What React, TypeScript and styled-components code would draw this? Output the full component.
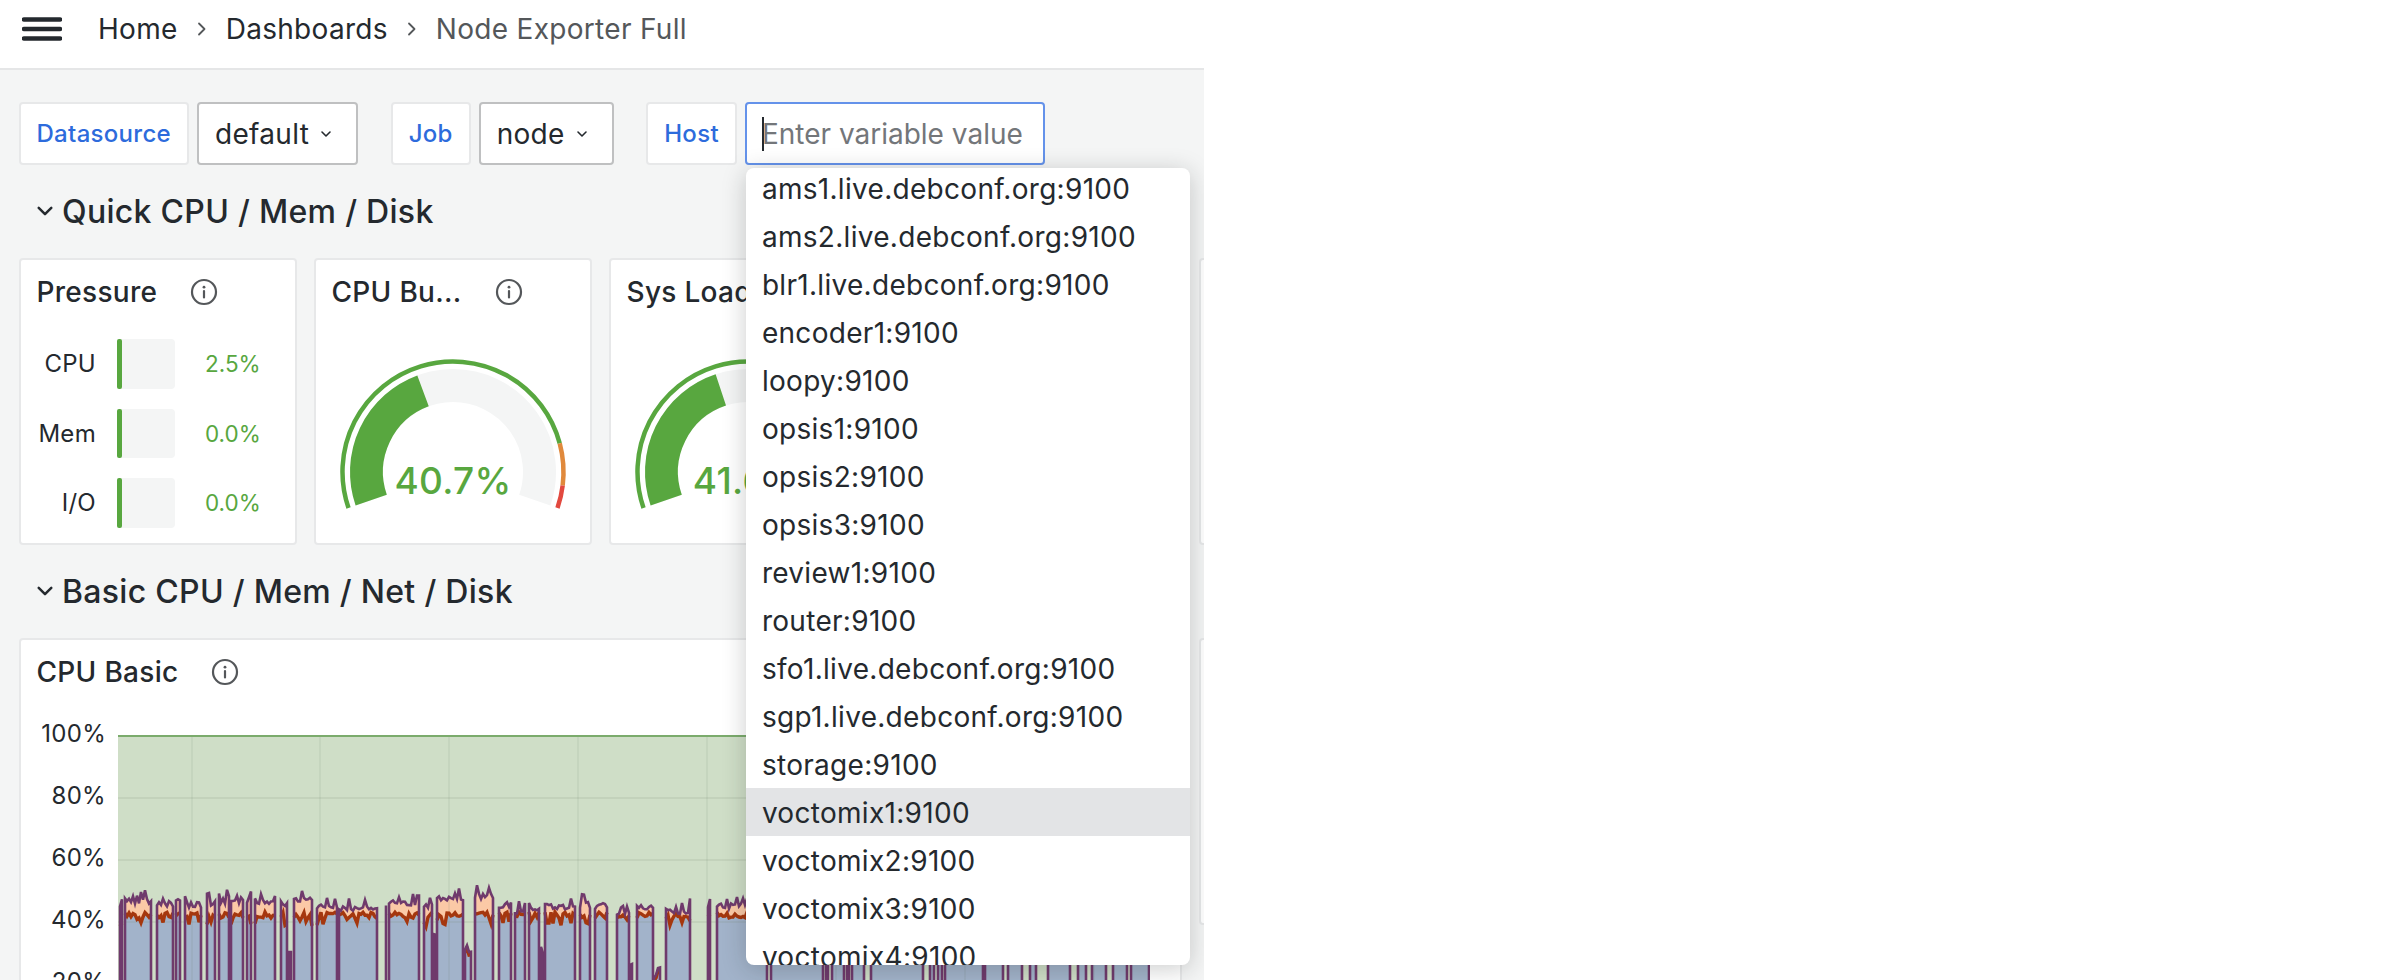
import styled, { createGlobalStyle } from 'styled-components'

const hosts = [
  'ams1.live.debconf.org:9100',
  'ams2.live.debconf.org:9100',
  'blr1.live.debconf.org:9100',
  'encoder1:9100',
  'loopy:9100',
  'opsis1:9100',
  'opsis2:9100',
  'opsis3:9100',
  'review1:9100',
  'router:9100',
  'sfo1.live.debconf.org:9100',
  'sgp1.live.debconf.org:9100',
  'storage:9100',
  'voctomix1:9100',
  'voctomix2:9100',
  'voctomix3:9100',
  'voctomix4:9100',
]

const pressure = [
  { label: 'CPU', value: '2.5%' },
  { label: 'Mem', value: '0.0%' },
  { label: 'I/O', value: '0.0%' },
]

const GREEN = '#58a73f'

const CHART_LEFT = 118
const CHART_TOP = 735
const CHART_WIDTH = 1032
const CHART_HEIGHT = 250

// x0, x1, top of the stack: read off the reference in page pixels
const segments: [number, number, number][] = [
  [120, 122, 904], [125, 151, 898], [157, 173, 901], [176, 181, 896], [185, 201, 902], [207, 216, 900],
  [219, 229, 899], [231, 243, 899], [247, 251, 897], [255, 275, 898], [281, 287, 901], [289, 291, 948],
  [294, 312, 897], [317, 337, 903], [339, 378, 905], [386, 387, 912], [389, 420, 900], [424, 432, 903],
  [433, 436, 930], [437, 463, 895], [465, 471, 948], [475, 493, 893], [499, 511, 902], [515, 525, 908],
  [529, 539, 906], [541, 543, 953], [545, 575, 904], [580, 590, 902], [595, 607, 903], [617, 629, 912],
  [630, 632, 960], [637, 653, 905], [654, 660, 973], [666, 691, 908], [695, 696, 978], [708, 711, 905],
  [717, 768, 903], [771, 824, 905], [826, 829, 905], [832, 845, 905], [847, 850, 905], [852, 864, 905],
  [871, 924, 905], [930, 935, 905], [938, 942, 905], [945, 984, 905], [985, 1003, 905], [1008, 1023, 905],
  [1030, 1037, 905], [1048, 1070, 905], [1078, 1087, 905], [1092, 1107, 905], [1113, 1128, 905],
  [1131, 1150, 905],
]

let seed = 41
const rand = () => {
  seed = (seed * 16807) % 2147483647
  return seed / 2147483647
}

const toPoints = (points: [number, number][]) =>
  points.map(([x, y]) => `${(x - CHART_LEFT).toFixed(1)},${(y - CHART_TOP).toFixed(1)}`).join(' ')

const layers = segments.map(([x0, x1, top]) => {
  const tops: [number, number][] = []
  const mids: [number, number][] = []
  for (let x = x0; x <= x1; x += 2) {
    const spike = rand() > 0.8 ? -6 - rand() * 4 : 0
    const y = top + rand() * 6 + spike
    const dip = rand() > 0.78 ? 5 + rand() * 5 : 0
    tops.push([x, y])
    mids.push([x, Math.max(y + 3, 912 + rand() * 6 + dip)])
  }
  const bottom = CHART_TOP + CHART_HEIGHT
  const first = tops[0][0]
  const last = tops[tops.length - 1][0]
  return {
    outline: toPoints([[first, bottom], ...tops, [last, bottom]]),
    peach: toPoints([...tops, ...[...mids].reverse()]),
    blue: toPoints([[first, bottom], ...mids, [last, bottom]]),
    brown: toPoints(mids),
  }
})

const gaugeArc = (cx: number, cy: number, r: number, from: number, to: number) => {
  const point = (deg: number) => {
    const rad = (deg * Math.PI) / 180
    return `${(cx + r * Math.sin(rad)).toFixed(2)} ${(cy - r * Math.cos(rad)).toFixed(2)}`
  }
  return `M ${point(from)} A ${r} ${r} 0 ${to - from > 180 ? 1 : 0} 1 ${point(to)}`
}

const InfoIcon = () => (
  <svg width="28" height="28" viewBox="0 0 28 28" fill="none">
    <circle cx="14" cy="14" r="12" stroke="#54575a" strokeWidth="2.2" />
    <circle cx="14" cy="9.2" r="1.4" fill="#54575a" />
    <path d="M14 13v6.5" stroke="#54575a" strokeWidth="2.2" strokeLinecap="round" />
  </svg>
)

const Chevron = ({ size = 14 }: { size?: number }) => (
  <svg width={size} height={size} viewBox="0 0 14 14" fill="none">
    <path d="M3 5l4 4 4-4" stroke="currentColor" strokeWidth="1.6" strokeLinecap="round" strokeLinejoin="round" />
  </svg>
)

const Crumb = () => (
  <svg width="12" height="16" viewBox="0 0 12 16" fill="none">
    <path d="M3 2.5L8.5 8 3 13.5" stroke="#54575a" strokeWidth="1.8" strokeLinecap="round" strokeLinejoin="round" />
  </svg>
)

const Gauge = ({ value, percent }: { value: string; percent: number }) => {
  const cx = 137
  const cy = 148
  const end = -109 + 218 * percent
  return (
    <GaugeSvg viewBox="0 0 274 218">
      <path d={gaugeArc(cx, cy, 86.5, -109, 109)} stroke="#f4f5f5" strokeWidth="33" fill="none" />
      <path d={gaugeArc(cx, cy, 86.5, -109, end)} stroke={GREEN} strokeWidth="33" fill="none" />
      <path d={gaugeArc(cx, cy, 110.5, -109, 75)} stroke={GREEN} strokeWidth="4.5" fill="none" />
      <path d={gaugeArc(cx, cy, 110.5, 75, 97)} stroke="#e0893c" strokeWidth="4.5" fill="none" />
      <path d={gaugeArc(cx, cy, 110.5, 97, 109)} stroke="#e2493f" strokeWidth="4.5" fill="none" />
      <GaugeValue x={cx} y={170} textAnchor="middle">
        {value}
      </GaugeValue>
    </GaugeSvg>
  )
}

export default function App() {
  return (
    <Page>
      <GlobalStyle />
      <Header>
        <svg width="40" height="24" viewBox="0 0 40 24" fill="none">
          <path d="M2 2.5h36M2 12h36M2 21.5h36" stroke="#24292e" strokeWidth="4.4" strokeLinecap="round" />
        </svg>
        <Breadcrumbs>
          <CrumbLink>Home</CrumbLink>
          <Crumb />
          <CrumbLink>Dashboards</CrumbLink>
          <Crumb />
          <CrumbLink $current>Node Exporter Full</CrumbLink>
        </Breadcrumbs>
      </Header>

      <Main>
        <Toolbar>
          <VarGroup>
            <VarLabel>Datasource</VarLabel>
            <VarSelect>
              default
              <Chevron />
            </VarSelect>
          </VarGroup>
          <VarGroup>
            <VarLabel>Job</VarLabel>
            <VarSelect>
              node
              <Chevron />
            </VarSelect>
          </VarGroup>
          <VarGroup>
            <VarLabel>Host</VarLabel>
            <InputWrap>
              <VarInput>Enter variable value</VarInput>
              <Caret />
              <Dropdown>
                <DropdownList>
                  {hosts.map((host) => (
                    <DropdownItem key={host} $active={host === 'voctomix1:9100'}>
                      {host}
                    </DropdownItem>
                  ))}
                </DropdownList>
              </Dropdown>
            </InputWrap>
          </VarGroup>
        </Toolbar>

        <SectionRow>
          <Chevron size={22} />
          <SectionTitle>Quick CPU / Mem / Disk</SectionTitle>
        </SectionRow>
        <PanelRow>
          <Panel $width={278}>
            <PanelHeader>
              <PanelTitle>Pressure</PanelTitle>
              <InfoIcon />
            </PanelHeader>
            <BarList>
              {pressure.map((row) => (
                <BarRow key={row.label}>
                  <BarLabel>{row.label}</BarLabel>
                  <BarTrack>
                    <BarFill />
                  </BarTrack>
                  <BarValue>{row.value}</BarValue>
                </BarRow>
              ))}
            </BarList>
          </Panel>
          <Panel $width={278}>
            <PanelHeader>
              <PanelTitle>CPU Bu...</PanelTitle>
              <InfoIcon />
            </PanelHeader>
            <Gauge value="40.7%" percent={0.407} />
          </Panel>
          <Panel $width={278}>
            <PanelHeader>
              <PanelTitle>Sys Load</PanelTitle>
            </PanelHeader>
            <Gauge value="41.6%" percent={0.416} />
          </Panel>
          <Panel $width={278} />
          <Panel $width={200} />
        </PanelRow>

        <SectionRow>
          <Chevron size={22} />
          <SectionTitle>Basic CPU / Mem / Net / Disk</SectionTitle>
        </SectionRow>
        <PanelRow>
          <Panel $width={1163} $tall>
            <PanelHeader>
              <PanelTitle>CPU Basic</PanelTitle>
              <InfoIcon />
            </PanelHeader>
            <ChartRow>
              <Axis>
                {['100%', '80%', '60%', '40%', '20%'].map((tick) => (
                  <AxisTick key={tick}>{tick}</AxisTick>
                ))}
              </Axis>
              <ChartSvg viewBox={`0 0 ${CHART_WIDTH} ${CHART_HEIGHT}`}>
                <rect x="0" y="1" width={CHART_WIDTH} height={CHART_HEIGHT} fill="#cfdec7" />
                {layers.map((layer, i) => (
                  <polygon key={i} points={layer.blue} fill="#a2b3ca" />
                ))}
                {layers.map((layer, i) => (
                  <polygon key={i} points={layer.peach} fill="#fbc9a6" />
                ))}
                {[63, 125, 187].map((y) => (
                  <line key={y} x1="0" x2={CHART_WIDTH} y1={y} y2={y} stroke="#6d7f6a" strokeOpacity="0.16" strokeWidth="1.5" />
                ))}
                {[74, 202, 331, 460, 589, 718, 847, 976].map((x) => (
                  <line key={x} x1={x} x2={x} y1="1" y2={CHART_HEIGHT} stroke="#6d7f6a" strokeOpacity="0.12" strokeWidth="1.5" />
                ))}
                {layers.map((layer, i) => (
                  <polyline key={i} points={layer.brown} fill="none" stroke="#a5370e" strokeWidth="3.4" />
                ))}
                {layers.map((layer, i) => (
                  <polyline key={i} points={layer.outline} fill="none" stroke="#6f3a6c" strokeWidth="2.6" />
                ))}
                <line x1="0" x2={CHART_WIDTH} y1="1" y2="1" stroke="#7bab6c" strokeWidth="2" />
              </ChartSvg>
            </ChartRow>
          </Panel>
          <Panel $width={200} />
        </PanelRow>
      </Main>
    </Page>
  )
}

const GlobalStyle = createGlobalStyle`
  html,
  body {
    margin: 0;
    padding: 0;
    background: #fff;
    font-family: Inter, 'Liberation Sans', sans-serif;
    letter-spacing: 0.3px;
    color: #24292e;
  }
`

const Page = styled.div`
  width: 2388px;
  height: 980px;
  overflow: hidden;
  background: #fff;
`

const Header = styled.header`
  display: flex;
  align-items: center;
  gap: 36px;
  box-sizing: border-box;
  width: 1204px;
  height: 70px;
  padding: 0 0 10px 22px;
  border-bottom: 2px solid #e5e6e7;
`

const Breadcrumbs = styled.nav`
  display: flex;
  align-items: center;
  gap: 18px;
`

const CrumbLink = styled.span<{ $current?: boolean }>`
  font-size: 28px;
  line-height: 40px;
  color: ${({ $current }) => ($current ? '#54575a' : '#24292e')};
`

const Main = styled.main`
  box-sizing: border-box;
  width: 1204px;
  height: 910px;
  padding: 32px 0 0 18.5px;
  overflow: hidden;
  background: #f4f5f5;
`

const Toolbar = styled.div`
  display: flex;
  gap: 32.5px;
  height: 63px;
`

const VarGroup = styled.div`
  display: flex;
  gap: 8px;
`

const VarLabel = styled.div`
  display: flex;
  align-items: center;
  box-sizing: border-box;
  height: 63px;
  padding: 0 16px;
  border: 2px solid #e7e8e9;
  border-radius: 4px;
  background: #fff;
  color: #2d6bdc;
  font-size: 24px;
  font-weight: 500;
`

const VarSelect = styled.div`
  display: flex;
  align-items: center;
  gap: 10px;
  box-sizing: border-box;
  height: 63px;
  padding: 0 23px 0 16px;
  border: 2px solid #bfc0c1;
  border-radius: 4px;
  background: #fff;
  font-size: 28px;
`

const InputWrap = styled.div`
  position: relative;
`

const VarInput = styled.div`
  display: flex;
  align-items: center;
  box-sizing: border-box;
  width: 300px;
  height: 63px;
  padding: 0 15px;
  border: 2px solid #6492ea;
  border-radius: 4px;
  background: #fff;
  color: #73767a;
  font-size: 28px;
  letter-spacing: 0;
  white-space: nowrap;
`

const Caret = styled.span`
  position: absolute;
  left: 17px;
  top: 15px;
  width: 2px;
  height: 34px;
  background: #24292e;
`

const Dropdown = styled.div`
  position: absolute;
  left: 1px;
  top: 66px;
  z-index: 10;
  width: 444px;
  height: 797px;
  overflow: hidden;
  border-radius: 8px;
  background: #fff;
  box-shadow: 0 4px 24px rgba(24, 26, 27, 0.22);
`

const DropdownList = styled.div`
  margin-top: -4px;
`

const DropdownItem = styled.div<{ $active?: boolean }>`
  box-sizing: border-box;
  height: 48px;
  padding-left: 16px;
  background: ${({ $active }) => ($active ? '#e3e4e6' : 'transparent')};
  font-size: 28px;
  line-height: 51px;
`

const SectionRow = styled.div`
  display: flex;
  align-items: center;
  gap: 6px;
  height: 46px;
  margin: 23px 0 24px 15.5px;
`

const SectionTitle = styled.h2`
  margin: 0;
  font-size: 32px;
  font-weight: 500;
`

const PanelRow = styled.div`
  display: flex;
  gap: 17px;
`

const Panel = styled.section<{ $width: number; $tall?: boolean }>`
  flex: none;
  box-sizing: border-box;
  width: ${({ $width }) => $width}px;
  height: ${({ $tall }) => ($tall ? '400px' : '287px')};
  border: 2px solid #e7e8e9;
  border-radius: 4px;
  background: #fff;
`

const PanelHeader = styled.div`
  display: flex;
  align-items: center;
  gap: 33px;
  height: 64px;
  padding-left: 16px;
`

const PanelTitle = styled.h3`
  margin: 0;
  font-size: 28px;
  font-weight: 500;
  white-space: nowrap;
`

const BarList = styled.div`
  display: flex;
  flex-direction: column;
  gap: 20px;
  padding-top: 15px;
`

const BarRow = styled.div`
  display: flex;
  align-items: center;
  height: 49.5px;
`

const BarLabel = styled.span`
  width: 75.5px;
  font-size: 24px;
  text-align: right;
`

const BarTrack = styled.div`
  width: 58px;
  height: 100%;
  margin: 0 30px 0 21px;
  border-radius: 4px;
  background: #f4f5f5;
`

const BarFill = styled.div`
  width: 4.5px;
  height: 100%;
  border-radius: 2px;
  background: ${GREEN};
`

const BarValue = styled.span`
  color: ${GREEN};
  font-size: 22.5px;
  letter-spacing: 0;
`

const GaugeSvg = styled.svg`
  display: block;
  width: 274px;
  height: 218px;
`

const GaugeValue = styled.text`
  fill: ${GREEN};
  font-family: Inter, 'Liberation Sans', sans-serif;
  font-size: 37px;
  font-weight: 500;
`

const ChartRow = styled.div`
  display: flex;
  gap: 12px;
`

const Axis = styled.div`
  width: 85.5px;
  margin-top: -1px;
`

const AxisTick = styled.div`
  height: 62px;
  font-size: 24px;
  line-height: 62px;
  text-align: right;
`

const ChartSvg = styled.svg`
  display: block;
  flex: none;
  width: 1032px;
  height: 250px;
  margin-top: 31px;
`
